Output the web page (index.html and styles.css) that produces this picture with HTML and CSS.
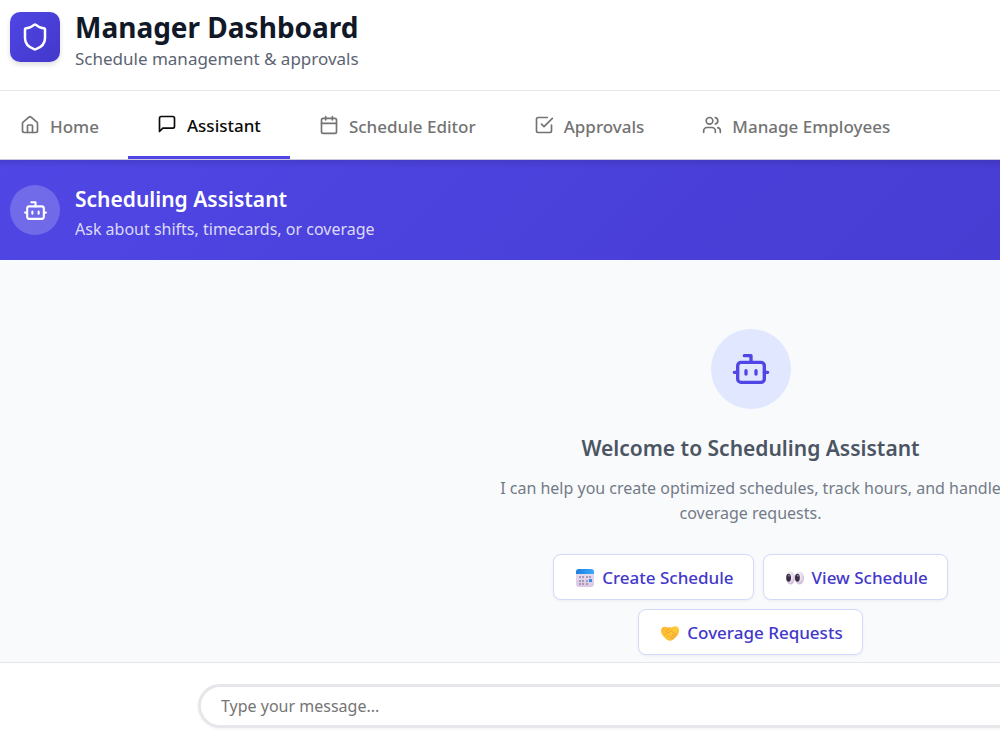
FILE: index.html
```html
<!DOCTYPE html>
<html lang="en">
<head>
<meta charset="utf-8">
<meta name="viewport" content="width=device-width, initial-scale=1">
<title>Manager Dashboard</title>
<link rel="stylesheet" href="styles.css">
</head>
<body>
<div class="viewport">
<div class="app">
  <header class="header">
    <div class="logo">
      <svg class="icon icon-lg" viewBox="0 0 24 24"><path d="M20 13c0 5-3.500 7.500-7.660 8.950a1 1 0 0 1-.67-.01C7.500 20.500 4 18 4 13V6a1 1 0 0 1 1-1c2 0 4.500-1.200 6.240-2.720a1.170 1.170 0 0 1 1.520 0C14.510 3.810 17 5 19 5a1 1 0 0 1 1 1z"/></svg>
    </div>
    <div>
      <h1 class="title">Manager Dashboard</h1>
      <p class="subtitle">Schedule management &amp; approvals</p>
    </div>
  </header>

  <nav class="tabs" aria-label="Dashboard sections">
    <button class="tab tab-first" type="button">
      <svg class="icon icon-tab" viewBox="0 0 24 24"><path d="M15 21v-8a1 1 0 0 0-1-1h-4a1 1 0 0 0-1 1v8"/><path d="M3 10a2 2 0 0 1 .709-1.528l7-6a2 2 0 0 1 2.582 0l7 6A2 2 0 0 1 21 10v9a2 2 0 0 1-2 2H5a2 2 0 0 1-2-2z"/></svg>
      Home
    </button>
    <button class="tab tab-active" type="button" aria-current="page">
      <svg class="icon icon-tab" viewBox="0 0 24 24"><path d="M21 15a2 2 0 0 1-2 2H7l-4 4V5a2 2 0 0 1 2-2h14a2 2 0 0 1 2 2z"/></svg>
      Assistant
    </button>
    <button class="tab" type="button">
      <svg class="icon icon-tab" viewBox="0 0 24 24"><path d="M8 2v4M16 2v4M3 10h18"/><rect x="3" y="4" width="18" height="18" rx="2"/></svg>
      Schedule Editor
    </button>
    <button class="tab" type="button">
      <svg class="icon icon-tab" viewBox="0 0 24 24"><path d="m9 11 3 3L22 4"/><path d="M21 12v7a2 2 0 0 1-2 2H5a2 2 0 0 1-2-2V5a2 2 0 0 1 2-2h11"/></svg>
      Approvals
    </button>
    <button class="tab" type="button">
      <svg class="icon icon-tab" viewBox="0 0 24 24"><path d="M16 21v-2a4 4 0 0 0-4-4H6a4 4 0 0 0-4 4v2"/><circle cx="9" cy="7" r="4"/><path d="M22 21v-2a4 4 0 0 0-3-3.870M16 3.130a4 4 0 0 1 0 7.750"/></svg>
      Manage Employees
    </button>
  </nav>

  <section class="banner">
    <div class="banner-avatar">
      <svg class="icon icon-md" viewBox="0 0 24 24"><path d="M12 8V4H8"/><rect x="4" y="8" width="16" height="12" rx="2"/><path d="M2 14h2M20 14h2M15 13v2M9 13v2"/></svg>
    </div>
    <div class="banner-copy">
      <h2 class="banner-title">Scheduling Assistant</h2>
      <p class="banner-text">Ask about shifts, timecards, or coverage</p>
    </div>
  </section>

  <main class="chat">
    <div class="welcome-avatar">
      <svg class="icon icon-xl" viewBox="0 0 24 24"><path d="M12 8V4H8"/><rect x="4" y="8" width="16" height="12" rx="2"/><path d="M2 14h2M20 14h2M15 13v2M9 13v2"/></svg>
    </div>
    <h3 class="welcome-title">Welcome to Scheduling Assistant</h3>
    <p class="welcome-text">I can help you create optimized schedules, track hours, and handle coverage requests.</p>
    <div class="actions">
      <button class="action" type="button">
        <svg class="emoji" viewBox="0 0 20 20">
          <defs>
            <linearGradient id="cal-top" x1="0" x2="1"><stop offset="0" stop-color="#1c7de0"/><stop offset="1" stop-color="#3ea9fb"/></linearGradient>
            <linearGradient id="cal-page" x1="0" y1="0" x2="0" y2="1"><stop offset="0" stop-color="#e9e2f1"/><stop offset="1" stop-color="#dbc6e6"/></linearGradient>
          </defs>
          <rect x="1" y="1" width="18" height="18" rx="3" fill="url(#cal-page)"/>
          <path d="M1 6V4a3 3 0 0 1 3-3h12a3 3 0 0 1 3 3v2z" fill="url(#cal-top)"/>
          <path d="M4 8h2v2H4zM7 8h2v2H7zM11 8h2v2h-2zM14 8h2v2h-2zM4 12h2v2H4zM7 12h2v2H7zM11 12h2v2h-2zM4 15h2v2H4zM7 15h2v2H7zM11 15h2v2h-2z" fill="#a79bb3"/>
          <rect x="14" y="11" width="3" height="3" rx=".5" fill="#2f8eea"/>
        </svg>
        Create Schedule
      </button>
      <button class="action" type="button">
        <svg class="emoji" viewBox="0 0 20 20">
          <defs><radialGradient id="eye" cx=".35" cy=".3" r=".75"><stop offset="0" stop-color="#f7f2fa"/><stop offset=".6" stop-color="#e5daeb"/><stop offset="1" stop-color="#c9b3d3"/></radialGradient></defs>
          <ellipse cx="5.500" cy="10" rx="4.500" ry="6.500" fill="url(#eye)"/>
          <ellipse cx="14.500" cy="10" rx="4.500" ry="6.500" fill="url(#eye)"/>
          <ellipse cx="3.600" cy="9.800" rx="2.400" ry="4" fill="#3b2d47"/>
          <ellipse cx="12.400" cy="9.800" rx="2.400" ry="4" fill="#3b2d47"/>
          <circle cx="4" cy="7.700" r=".9" fill="#9786a5"/>
          <circle cx="12.800" cy="7.700" r=".9" fill="#9786a5"/>
        </svg>
        View Schedule
      </button>
      <button class="action" type="button">
        <svg class="emoji" viewBox="0 0 20 20">
          <defs><linearGradient id="hand" x1="0" y1="0" x2="1" y2="1"><stop offset="0" stop-color="#ffb02e"/><stop offset=".5" stop-color="#ffcb36"/><stop offset="1" stop-color="#f6a63a"/></linearGradient></defs>
          <path d="M1 7.500C1 4.800 3.200 3.500 5 3.700c2 .2 3.200 1 5 .9 1.800.1 3.500-1.500 5.400-1.400 2.600.1 3.900 2.200 3.600 4.800-.2 2.500-1.500 4.500-3 6-1.600 1.700-3.500 3.500-5.500 3.800-2.300.3-4.400-1.600-6-3.200C2.700 12.800 1 10.700 1 7.500z" fill="url(#hand)"/>
          <path d="M10 4.600 6.800 8.300c-.5 1.400 1.500 1.900 2.600.9l1.700-1.500 4.700 4.100M12.200 11.500l2.300 2.200M10 13l2.200 2.400M4.500 12l2-1.500M6.500 14l2-1.500" fill="none" stroke="#e8943a" stroke-width=".8" stroke-linecap="round"/>
        </svg>
        Coverage Requests
      </button>
    </div>
  </main>

  <form class="composer">
    <input class="message" type="text" placeholder="Type your message..." aria-label="Message">
  </form>
</div>
</div>
</body>
</html>
```

FILE: styles.css
```css
* {
  box-sizing: border-box;
}

body {
  margin: 0;
  font-family: "Noto Sans", "Open Sans", sans-serif;
  font-size: 17px;
  line-height: 25px;
  color: #111827;
}

h1,
h2,
h3,
p {
  margin: 0;
}

button,
input {
  font: inherit;
}

.viewport {
  overflow: hidden;
}

/* The dashboard is a wide desktop layout and is clipped on narrow windows. */
.app {
  display: flex;
  flex-direction: column;
  min-width: 1501px;
  min-height: 100vh;
  background: #fff;
}

.icon {
  flex: none;
  width: 20px;
  height: 20px;
  fill: none;
  stroke: currentColor;
  stroke-width: 2;
  stroke-linecap: round;
  stroke-linejoin: round;
}

.icon-tab {
  margin-bottom: 3px;
}

.icon-md {
  width: 25px;
  height: 25px;
}

.icon-lg {
  width: 30px;
  height: 30px;
}

.icon-xl {
  width: 40px;
  height: 40px;
}

.header {
  display: flex;
  align-items: flex-start;
  gap: 15px;
  padding: 12px 10px 19px;
  border-bottom: 1px solid #e5e7eb;
}

.logo {
  display: grid;
  place-items: center;
  width: 50px;
  height: 50px;
  border-radius: 10px;
  background: linear-gradient(135deg, #4f46e5, #4338ca);
  box-shadow: 0 3px 5px rgba(0, 0, 0, 0.12);
  color: #fff;
}

.title {
  font-size: 28px;
  line-height: 30px;
  font-weight: 700;
}

.subtitle {
  margin-top: 4px;
  color: #5b6472;
}

.tabs {
  display: flex;
  height: 69px;
  border-bottom: 1px solid #c9c8dc;
}

.tab {
  display: flex;
  align-items: center;
  gap: 10px;
  padding: 3px 29px 0;
  border: 0;
  background: none;
  color: #737373;
  font-weight: 500;
}

.tab-first {
  padding-left: 20px;
}

.tab-active {
  border-bottom: 3px solid #4f46e5;
  color: #0a0a0a;
}

.banner {
  display: flex;
  align-items: center;
  gap: 15px;
  height: 100px;
  padding: 0 10px;
  background:
    linear-gradient(rgba(0, 0, 0, 0.1), transparent 8px),
    linear-gradient(135deg, #4f46e5, #4338ca);
  color: #fff;
}

.banner-avatar {
  display: grid;
  place-items: center;
  width: 50px;
  height: 50px;
  border-radius: 50%;
  background: rgba(255, 255, 255, 0.2);
}

.banner-copy {
  padding-top: 5px;
}

.banner-title {
  font-size: 21px;
  line-height: 30px;
  font-weight: 600;
}

.banner-text {
  margin-top: 3px;
  font-size: 16px;
  color: #dcdafa;
}

.chat {
  display: flex;
  flex: 1;
  flex-direction: column;
  align-items: center;
  padding: 69px 20px 7px;
  background: #f9fafc;
  text-align: center;
}

.welcome-avatar {
  display: grid;
  place-items: center;
  width: 80px;
  height: 80px;
  border-radius: 50%;
  background: #e0e7ff;
  color: #4f46e5;
}

.welcome-title {
  margin-top: 24px;
  font-size: 21px;
  line-height: 30px;
  font-weight: 600;
  color: #4b5563;
}

.welcome-text {
  max-width: 560px;
  margin-top: 13px;
  font-size: 16px;
  color: #737b88;
}

.actions {
  display: flex;
  flex-wrap: wrap;
  justify-content: center;
  gap: 9px;
  max-width: 560px;
  margin-top: 28px;
}

.action {
  display: flex;
  align-items: center;
  gap: 7px;
  height: 46px;
  padding: 1px 19px 0 21px;
  border: 1px solid #d3dafc;
  border-radius: 8px;
  background: #fff;
  box-shadow: 0 1px 3px rgba(0, 0, 0, 0.06);
  color: #4338ca;
  font-weight: 500;
}

.emoji {
  width: 20px;
  height: 20px;
}

.composer {
  display: flex;
  justify-content: center;
  padding: 21px 20px 22px;
  border-top: 1px solid #e5e7eb;
}

.message {
  width: 100%;
  max-width: 1105px;
  height: 44px;
  padding: 0 20px;
  border: 3px solid #e5e7eb;
  border-radius: 22px;
  background: #fff;
  box-shadow: 0 1px 3px rgba(0, 0, 0, 0.05);
  font-size: 16px;
}

.message::placeholder {
  color: #757575;
  opacity: 1;
}
```
